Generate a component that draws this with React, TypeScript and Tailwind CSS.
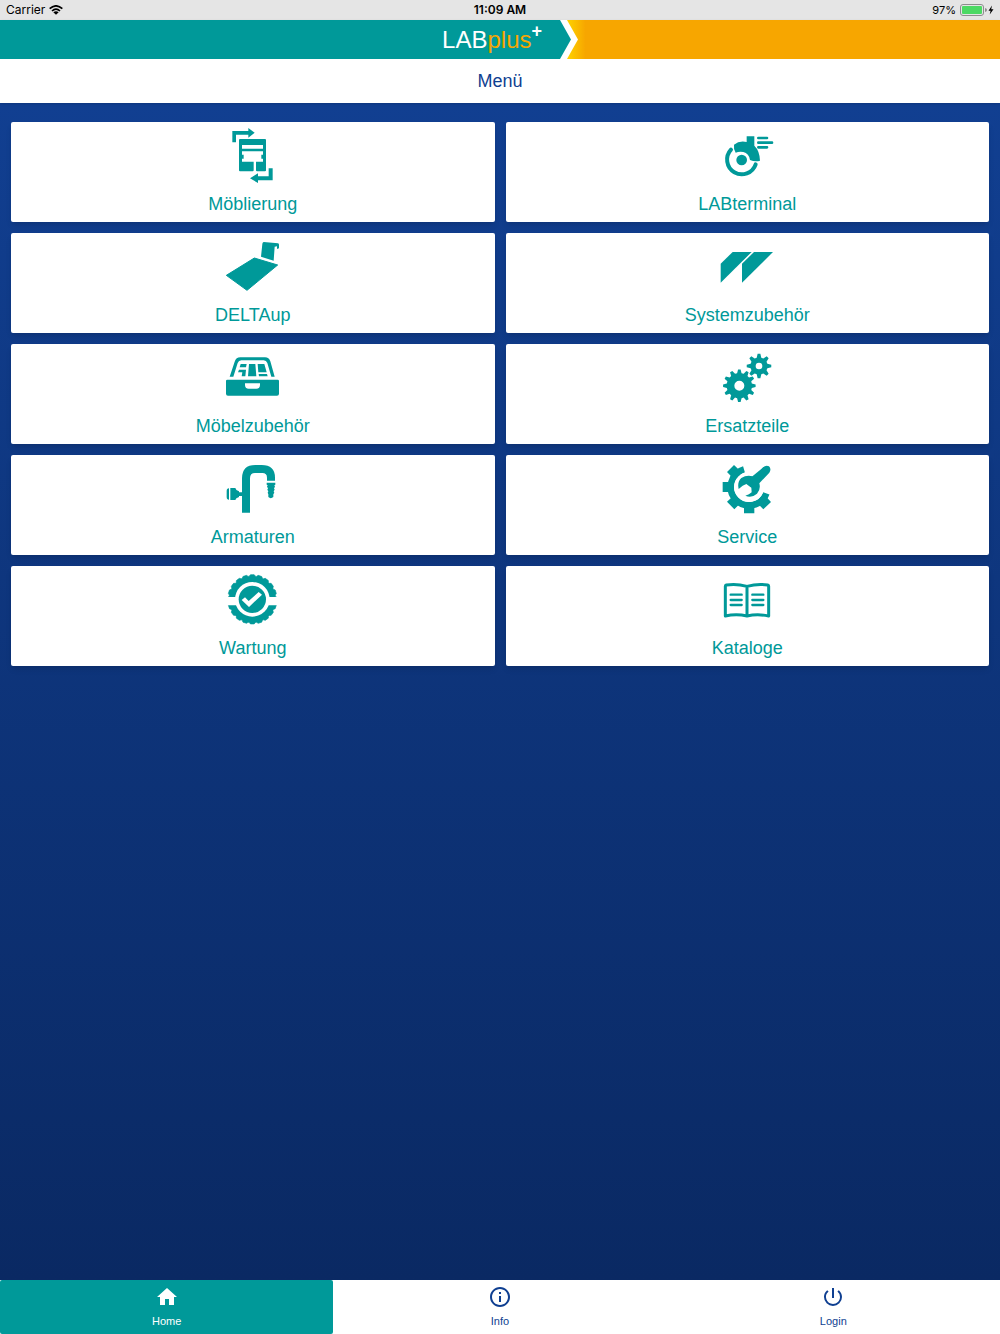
import type { ReactNode } from 'react'
import { MdHome, MdInfoOutline, MdPowerSettingsNew } from 'react-icons/md'

// closed outline of a cog wheel, tip and base are half tooth widths as a share of the step
function cog(cx: number, cy: number, outer: number, root: number, teeth: number, tip: number, base: number) {
  const step = (Math.PI * 2) / teeth
  const points: string[] = []
  for (let i = 0; i < teeth; i++) {
    const a = i * step - Math.PI / 2
    const corners = [
      [root, -base],
      [outer, -tip],
      [outer, tip],
      [root, base],
    ]
    corners.forEach(([r, k]) => {
      points.push(`${(cx + r * Math.cos(a + k * step)).toFixed(1)} ${(cy + r * Math.sin(a + k * step)).toFixed(1)}`)
    })
  }
  return `M${points.join('L')}Z`
}

function hole(cx: number, cy: number, r: number) {
  return `M${cx - r} ${cy}a${r} ${r} 0 1 0 ${r * 2} 0a${r} ${r} 0 1 0 ${-r * 2} 0Z`
}

function Icon({ viewBox, children }: { viewBox: string; children: ReactNode }) {
  return (
    <svg viewBox={viewBox} className="size-15" fill="currentColor" fillRule="evenodd" aria-hidden="true">
      {children}
    </svg>
  )
}

const items = [
  {
    label: 'Möblierung',
    icon: (
      <Icon viewBox="99 15 180 180">
        <path d="M127 67V33H175V24L194 38L175 53V44H138V67Z" />
        <path d="M248 145V181H204V189L180 175L204 160V169H236V145Z" />
        <path d="M150 57H225Q228 57 228 60V151Q228 154 225 154H201Q198 154 198 151V125H219V116H214V104H219V94H156V104H161V116H156V125H191V151Q191 154 188 154H150Q147 154 147 151V60Q147 57 150 57ZM156 75V86H219V75Z" />
      </Icon>
    ),
  },
  {
    label: 'LABterminal',
    icon: (
      <Icon viewBox="98 15 180 180">
        <circle cx="172" cy="120" r="16" />
        <path d="M140 89A44 44 0 1 0 214 133" fill="none" stroke="currentColor" strokeWidth="12" strokeLinecap="round" />
        <path d="M187 49H210V77Q226 92 227 122Q212 126 197 120Q194 100 177 96Q164 94 154 98Q147 88 149 74Q165 61 187 66Z" />
        <path d="M222 54H248M222 68H263M222 82H248" stroke="currentColor" strokeWidth="8" strokeLinecap="round" />
      </Icon>
    ),
  },
  {
    label: 'DELTAup',
    icon: (
      <Icon viewBox="99 18 180 180">
        <path
          d="M109 136L193 84L263 105L171 181Z"
          stroke="currentColor"
          strokeWidth="3"
          strokeLinejoin="round"
        />
        <path d="M221 36L264 40Q267 41 267 44V55L261 57V49L254 50L251 92L213 80L217 42Q217 37 221 36Z" />
      </Icon>
    ),
  },
  {
    label: 'Systemzubehör',
    icon: (
      <Icon viewBox="97 18 180 180">
        <path d="M108 101L144 66H201L108 158Z" />
        <path d="M172 101L208 66H265L172 158Z" />
      </Icon>
    ),
  },
  {
    label: 'Möbelzubehör',
    icon: (
      <Icon viewBox="99 351 180 180">
        <path d="M119 440L134 395Q138 382 151 382H225Q237 382 241 394L254 440H244L232 399Q229 391 221 391H154Q146 391 143 399L130 440Z" />
        <path d="M152 402H170L168 412H149ZM147 419H168L166 439H155L157 427H144ZM177 402H196L199 439H174ZM203 402H223L230 427H205ZM206 432H231L233 439H207Z" />
        <path d="M112 449H263Q267 449 267 453V491Q267 497 261 497H114Q108 497 108 491V453Q108 449 112 449ZM165 460V465Q165 476 176 476H199Q210 476 210 465V460Z" />
      </Icon>
    ),
  },
  {
    label: 'Ersatzteile',
    icon: (
      <Icon viewBox="97 351 180 180">
        <path d={cog(223, 408, 37, 26, 8, 0.14, 0.34) + hole(223, 408, 10)} />
        <path d={cog(164, 467, 49, 38, 12, 0.15, 0.34) + hole(164, 467, 15)} />
      </Icon>
    ),
  },
  {
    label: 'Armaturen',
    icon: (
      <Icon viewBox="99 24 180 180">
        <path d="M156 188V85Q156 45 196 45H215Q255 45 255 83V92H231V83Q231 69 217 69H195Q180 69 180 85V188Z" />
        <path d="M230 98H256V104L253 106L255 110L252 115L254 119L251 124L253 128L250 133V141Q242 148 235 141V133L233 128L235 124L232 119L234 115L231 110L233 106L230 104Z" />
        <path d="M121 114H136Q137 121 147 124V127H157V138H147V141Q137 144 136 150H121ZM117 115V149Q110 149 110 141V123Q110 115 117 115Z" />
      </Icon>
    ),
  },
  {
    label: 'Service',
    icon: (
      <Icon viewBox="97 24 180 180">
        <path d="M178 58A55 55 0 1 0 245 130" fill="none" stroke="currentColor" strokeWidth="20" />
        <path d="M148 45L173 69L151 91L127 66ZM114 96H140V126H114ZM127 155L149 178L170 157L149 135ZM178 160H209V190H178ZM215 157L236 178L259 156L237 132Z" />
        <circle cx="193" cy="111" r="45" className="fill-white" />
        <path d="M206 92L234 53Q244 44 253 49Q261 57 254 68L224 100Q229 119 217 131Q201 145 182 137Q194 134 201 127L200 113L185 102L174 107L162 117Q157 96 170 84Q186 74 204 79Z" />
        <path d="M202 94L245 59" stroke="currentColor" strokeWidth="22" />
      </Icon>
    ),
  },
  {
    label: 'Wartung',
    icon: (
      <Icon viewBox="99 357 180 180">
        <path d={cog(187, 448, 74, 70, 20, 0.24, 0.42)} strokeWidth="2" stroke="currentColor" strokeLinejoin="round" />
        <path d="M108 441H140V466H108ZM234 441H266V466H234Z" className="fill-white" />
        <circle cx="187" cy="448" r="52" className="fill-white" />
        <circle cx="187" cy="448" r="41" />
        <path d="M155 450L165 442L176 453L206 426L216 434L177 471Z" className="fill-white" />
      </Icon>
    ),
  },
  {
    label: 'Kataloge',
    icon: (
      <Icon viewBox="97 357 180 180">
        <g fill="none" stroke="currentColor" strokeWidth="9" strokeLinejoin="round" strokeLinecap="round">
          <path d="M187 409Q155 400 125 405Q122 406 122 409V498Q155 491 187 498Q219 491 252 498V409Q252 406 249 405Q219 400 187 409V498" />
          <path d="M138 434H171M138 450H171M138 465H171M203 434H236M203 450H236M203 465H236" strokeWidth="7" />
        </g>
      </Icon>
    ),
  },
]

function StatusBar() {
  return (
    <div className="grid h-5 grid-cols-3 items-center bg-[#e5e5e5] px-1.5 font-['Inter',sans-serif] text-xs text-black">
      <div className="flex items-center gap-1">
        <span>Carrier</span>
        <svg viewBox="0 0 42 30" className="h-2.5 w-3.5" fill="none" stroke="currentColor" strokeWidth="5" aria-hidden="true">
          <path d="M2 11Q21 -6 40 11" />
          <path d="M9 18Q21 7 33 18" />
          <path d="M21 29L13 22Q21 15 29 22Z" fill="currentColor" stroke="none" />
        </svg>
      </div>
      <span className="text-center font-semibold">11:09 AM</span>
      <div className="flex items-center justify-end gap-1">
        <span className="text-[11px]">97%</span>
        <svg viewBox="0 0 34 12" className="h-3 w-[34px]" aria-hidden="true">
          <rect x="0.5" y="0.5" width="23" height="11" rx="2.5" fill="none" stroke="#8d8d8d" />
          <rect x="2" y="2" width="20" height="8" rx="1" fill="#4cd964" />
          <path d="M25 4Q27 4.500 27 6Q27 7.500 25 8Z" fill="#8d8d8d" />
          <path d="M32 1.500L28.500 6.700H30.600L29.700 10.500L33.500 5.200H31.200Z" />
        </svg>
      </div>
    </div>
  )
}

function Header() {
  return (
    <header className="relative bg-white shadow-sm">
      <div className="flex h-[39px] bg-[#f7a600]">
        <div className="flex w-[56%] items-center justify-end bg-[#009999] pr-[18px] text-2xl text-white">
          <span>LAB</span>
          <span className="text-[#f7a600]">plus</span>
          <sup className="text-lg font-bold">+</sup>
        </div>
        <svg viewBox="0 0 30 39" className="h-full w-[30px]" aria-hidden="true">
          <defs>
            <linearGradient id="glow">
              <stop offset="0.2" stopColor="#ffd500" />
              <stop offset="0.85" stopColor="#f7a600" />
            </linearGradient>
          </defs>
          <path d="M0 0H30V39H0Z" fill="url(#glow)" />
          <path d="M0 0H7L18 19.500L7 39H0Z" fill="#fff" />
          <path d="M0 0L11 19.500L0 39Z" fill="#009999" />
        </svg>
      </div>
      <h1 className="flex h-11 items-center justify-center text-lg text-[#0f3f91]">Menü</h1>
    </header>
  )
}

function TabBar() {
  const tab = 'flex flex-1 flex-col items-center pt-[5px]'
  return (
    <nav className="flex h-[54px] bg-white text-[11px] leading-6 text-[#0f3f91]">
      <a href="#home" className={`${tab} rounded-xs bg-[#009999] text-white`}>
        <MdHome className="size-6 shrink-0" />
        <span>Home</span>
      </a>
      <a href="#info" className={tab}>
        <MdInfoOutline className="size-6 shrink-0" />
        <span>Info</span>
      </a>
      <a href="#login" className={tab}>
        <MdPowerSettingsNew className="size-6 shrink-0" />
        <span>Login</span>
      </a>
    </nav>
  )
}

export default function App() {
  return (
    <div className="flex min-h-screen flex-col bg-[#0a2963] font-['Liberation_Sans',Arial,sans-serif]">
      <StatusBar />
      <Header />
      <main className="flex-1 bg-linear-to-b from-[#113f91] to-[#0a2963] px-[11px] pt-[19px] pb-4">
        <div className="grid grid-cols-2 gap-[11px]">
          {items.map((item) => (
            <a
              key={item.label}
              href={`#${item.label.toLowerCase()}`}
              className="flex h-[100px] flex-col items-center rounded-xs bg-white pt-[3px] text-lg text-[#009999] shadow-md"
            >
              {item.icon}
              <span className="mt-[5px] leading-7">{item.label}</span>
            </a>
          ))}
        </div>
      </main>
      <TabBar />
    </div>
  )
}
